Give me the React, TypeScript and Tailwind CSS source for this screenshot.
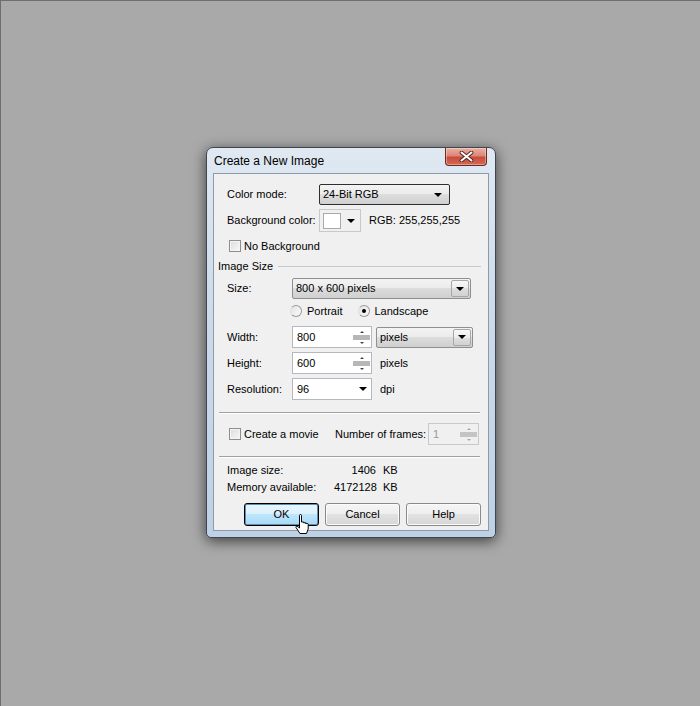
import React from 'react'

const font = { fontFamily: '"Liberation Sans", Arial, sans-serif' }

function Arrow({ size = 4 }: { size?: number }) {
  return size === 4 ? (
    <span className="block w-0 h-0 border-l-[4px] border-r-[4px] border-t-[4px] border-l-transparent border-r-transparent border-t-black" />
  ) : (
    <span className="block w-0 h-0 border-l-[3px] border-r-[3px] border-t-[3px] border-l-transparent border-r-transparent border-t-black" />
  )
}

const btnGrad =
  'bg-[linear-gradient(to_bottom,#f3f3f3_0%,#ebebeb_50%,#dddddd_50%,#cfcfcf_100%)]'

function Select({
  value,
  width,
  focused,
  boxed,
}: {
  value: string
  width: string
  focused?: boolean
  boxed?: boolean
}) {
  return (
    <div
      className={`${width} h-[21px] flex items-center rounded-[2px] border ${
        focused ? 'border-[#2f2f2f]' : 'border-[#8e8f8f]'
      } ${btnGrad}`}
    >
      <span className="flex-1 pl-[3px] text-[11px] text-black leading-none">{value}</span>
      {boxed ? (
        <span className="w-[18px] h-[17px] mr-[1px] flex items-center justify-center border border-[#a7a7a7] rounded-[2px] bg-[linear-gradient(to_bottom,#f7f7f7_0%,#ececec_50%,#dedede_50%,#d2d2d2_100%)]">
          <Arrow />
        </span>
      ) : (
        <span className="w-[18px] flex items-center justify-center mr-[2px]">
          <Arrow />
        </span>
      )}
    </div>
  )
}

function Spin({ disabled }: { disabled?: boolean }) {
  const tri = disabled ? 'border-b-[#a8a8a8]' : 'border-b-[#444]'
  const triD = disabled ? 'border-t-[#a8a8a8]' : 'border-t-[#444]'
  return (
    <div className="w-[17px] h-full flex flex-col">
      <div className="h-[7px] flex items-center justify-center">
        <span className={`block w-0 h-0 border-l-[2px] border-r-[2px] border-b-[2px] border-l-transparent border-r-transparent ${tri}`} />
      </div>
      <div className={`h-[5px] ${disabled ? 'bg-[#c4c4c4]' : 'bg-[#b7b7b7]'}`} />
      <div className="flex-1 flex items-center justify-center">
        <span className={`block w-0 h-0 border-l-[2px] border-r-[2px] border-t-[2px] border-l-transparent border-r-transparent ${triD}`} />
      </div>
    </div>
  )
}

function Field({
  value,
  kind,
  width = 'w-[80px]',
  disabled,
}: {
  value: string
  kind: 'spin' | 'combo'
  width?: string
  disabled?: boolean
}) {
  return (
    <div
      className={`${width} h-[22px] flex items-stretch border ${
        disabled ? 'border-[#c9c9c9] bg-[#f0f0f0]' : 'border-[#b5b8bd] bg-white'
      }`}
    >
      <span
        className={`flex-1 flex items-center pl-[4px] text-[11px] leading-none ${
          disabled ? 'text-[#9a9a9a]' : 'text-black'
        }`}
      >
        {value}
      </span>
      {kind === 'spin' ? (
        <div className="py-[1px] pr-[1px]">
          <Spin disabled={disabled} />
        </div>
      ) : (
        <span className="w-[17px] flex items-center justify-center">
          <Arrow />
        </span>
      )}
    </div>
  )
}

function Check() {
  return (
    <span className="block w-[12px] h-[12px] border border-[#8f8f8f] bg-[linear-gradient(135deg,#dcdcdc,#f8f8f8)] shadow-[inset_0_0_0_1px_#f4f4f4]" />
  )
}

function Radio({ checked }: { checked?: boolean }) {
  return (
    <span className="w-[12px] h-[12px] rounded-full border border-[#9a9a9a] border-l-[#dedede] bg-[linear-gradient(135deg,#e2e2e2,#fbfbfb)] flex items-center justify-center">
      {checked && <span className="block w-[4px] h-[4px] rounded-full bg-black" />}
    </span>
  )
}

function Etch({ className = '' }: { className?: string }) {
  return <div className={`border-t border-[#a0a0a0] border-b border-b-white ${className}`} />
}

function Button({ label, primary }: { label: string; primary?: boolean }) {
  return (
    <div
      className={`w-[75px] h-[23px] flex items-center justify-center text-[11px] text-black rounded-[3px] border ${
        primary
          ? 'border-black bg-[linear-gradient(to_bottom,#eaf6fd_0%,#d9f0fc_50%,#bee6fd_50%,#a7d9f5_100%)] shadow-[inset_0_0_0_1px_#5a8fb8]'
          : `border-[#8a8a8a] bg-[linear-gradient(to_bottom,#f5f5f5_0%,#eeeeee_50%,#e2e2e2_50%,#d6d6d6_100%)] shadow-[inset_0_0_0_1px_#fbfbfb]`
      }`}
    >
      {label}
    </div>
  )
}

export default function App() {
  return (
    <div
      className="relative w-[700px] h-[706px] bg-[#a9a9a9] border-t border-l border-[#6e6e6e] pl-[205px] pt-[146px]"
      style={font}
    >
      {/* dialog window */}
      <div className="w-[290px] h-[391px] flex flex-col rounded-t-[7px] rounded-b-[5px] border border-[#3f4650] bg-[linear-gradient(to_bottom,#e0e9f2_0%,#cddbea_40%,#bed1e5_100%)] shadow-[0_3px_14px_rgba(0,0,0,0.65)]">
        <div className="h-[25px] flex items-start justify-between pl-[7px] pr-[8px]">
          <span className="leading-[27px] text-[12px] text-black">Create a New Image</span>
          <div className="w-[42px] h-[18px] rounded-b-[4px] border border-t-0 border-[#6b2a22] bg-[linear-gradient(to_bottom,#eab0a4_0%,#de8676_45%,#c94c3b_55%,#d26a55_100%)] flex items-center justify-center shadow-[inset_0_0_0_1px_rgba(255,255,255,0.35)]">
            <svg width="15" height="11" viewBox="0 0 15 11">
              <path
                d="M2.5 1.5 L12.5 9.5 M12.5 1.5 L2.5 9.5"
                stroke="#4a1e18"
                strokeWidth="3.8"
                strokeLinecap="round"
              />
              <path
                d="M2.5 1.5 L12.5 9.5 M12.5 1.5 L2.5 9.5"
                stroke="#ffffff"
                strokeWidth="2.1"
                strokeLinecap="round"
              />
            </svg>
          </div>
        </div>

        {/* client area */}
        <div className="mx-[6px] h-[358px] border border-[#8d9aab] bg-[#f0f0f0] flex flex-col text-[11px] text-black">
          <div className="mt-[10px] h-[21px] flex items-center">
            <span className="w-[105px] pl-[13px]">Color mode:</span>
            <Select value="24-Bit RGB" width="w-[131px]" focused />
          </div>

          <div className="mt-[4px] h-[23px] flex items-center">
            <span className="w-[105px] pl-[13px]">Background color:</span>
            <div className="w-[42px] h-[23px] border border-[#c9c9c9] flex items-center pl-[3px] gap-[6px]">
              <span className="block w-[18px] h-[16px] bg-white border border-[#a9a9a9]" />
              <Arrow />
            </div>
            <span className="ml-[8px]">RGB: 255,255,255</span>
          </div>

          <div className="mt-[6px] h-[16px] flex items-center pl-[15px] gap-[3px]">
            <Check />
            <span>No Background</span>
          </div>

          <div className="mt-[5px] h-[14px] flex items-center pl-[4px]">
            <span>Image Size</span>
            <div className="flex-1 ml-[5px] mr-[7px] border-t border-[#c2c9cf]" />
          </div>

          <div className="mt-[5px] h-[21px] flex items-center">
            <span className="w-[78px] pl-[13px]">Size:</span>
            <Select value="800 x 600 pixels" width="w-[179px]" boxed />
          </div>

          <div className="mt-[5px] h-[14px] flex items-center pl-[76px]">
            <Radio />
            <span className="ml-[5px]">Portrait</span>
            <span className="ml-[16px]">
              <Radio checked />
            </span>
            <span className="ml-[4px]">Landscape</span>
          </div>

          <div className="mt-[8px] h-[22px] flex items-center">
            <span className="w-[78px] pl-[13px]">Width:</span>
            <Field value="800" kind="spin" />
            <span className="ml-[4px]">
              <Select value="pixels" width="w-[97px]" boxed />
            </span>
          </div>

          <div className="mt-[4px] h-[22px] flex items-center">
            <span className="w-[78px] pl-[13px]">Height:</span>
            <Field value="600" kind="spin" />
            <span className="ml-[8px]">pixels</span>
          </div>

          <div className="mt-[4px] h-[22px] flex items-center">
            <span className="w-[78px] pl-[13px]">Resolution:</span>
            <Field value="96" kind="combo" />
            <span className="ml-[8px]">dpi</span>
          </div>

          <Etch className="mt-[12px] ml-[5px] mr-[8px]" />

          <div className="mt-[9px] h-[22px] flex items-center">
            <span className="w-[121px] pl-[15px] flex items-center gap-[3px]">
              <Check />
              <span>Create a movie</span>
            </span>
            <span className="w-[93px]">Number of frames:</span>
            <Field value="1" kind="spin" width="w-[51px]" disabled />
          </div>

          <Etch className="mt-[11px] ml-[5px] mr-[8px]" />

          <div className="mt-[4px] h-[16px] flex items-center">
            <span className="w-[120px] pl-[13px]">Image size:</span>
            <span className="w-[42px] text-right">1406</span>
            <span className="ml-[7px]">KB</span>
          </div>
          <div className="mt-[1px] h-[16px] flex items-center">
            <span className="w-[120px] pl-[13px]">Memory available:</span>
            <span className="w-[42px] text-right">4172128</span>
            <span className="ml-[7px]">KB</span>
          </div>

          <div className="mt-[8px] h-[23px] flex pl-[30px] gap-[6px]">
            <Button label="OK" primary />
            <Button label="Cancel" />
            <Button label="Help" />
          </div>
        </div>
      </div>

      {/* mouse pointer over OK */}
      <svg
        className="absolute left-[294px] top-[513px]"
        width="14"
        height="21"
        viewBox="0 0 14 21"
      >
        <path
          d="M4.5 1.5 Q4.5 0.5 5.5 0.5 Q6.5 0.5 6.5 1.5 V8 H8.5 V8.7 H10.5 V9.4 H12.2 Q13.2 9.4 13.2 10.4 V15 L11.5 19.5 H5 L1 13.5 Q0.6 12 2 12 L4.5 14 Z"
          fill="#ffffff"
          stroke="#000000"
          strokeWidth="1"
          strokeLinejoin="round"
        />
      </svg>
    </div>
  )
}
